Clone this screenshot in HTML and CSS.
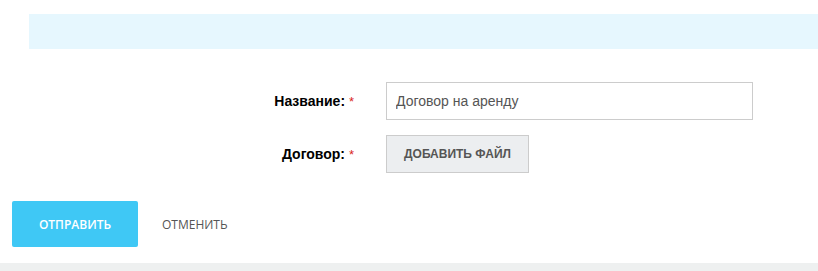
FILE: index.html
```html
<!DOCTYPE html>
<html>
<head>
<meta charset="utf-8">
<title>Договор</title>
<link rel="stylesheet" href="styles.css">
</head>
<body>
  <div class="notice"></div>

  <form class="doc-form">
    <div class="row">
      <label class="label" for="title">Название: <span class="req">*</span></label>
      <input class="field" id="title" type="text" value="Договор на аренду">
    </div>
    <div class="row">
      <label class="label">Договор: <span class="req">*</span></label>
      <button type="button" class="btn-file">Добавить файл</button>
    </div>

    <div class="actions">
      <button type="submit" class="btn-send">Отправить</button>
      <button type="button" class="btn-cancel">Отменить</button>
    </div>
  </form>

  <div class="footer"></div>
</body>
</html>
```

FILE: styles.css
```css
body {
  margin: 0;
  background: #fff;
  font: 13px Arial, "Liberation Sans", sans-serif;
  color: #000;
}

.notice {
  margin: 14px 0 0 29px;
  height: 35px;
  background: #e6f7fe;
}

.doc-form {
  padding-top: 33px;
}

.row {
  display: flex;
  align-items: center;
  margin-bottom: 15px;
}

.label {
  width: 354px;
  margin-right: 32px;
  text-align: right;
  font-weight: bold;
  font-size: 14px;
}

.req {
  color: #d9261c;
  font-weight: normal;
  font-size: 13px;
}

.field {
  box-sizing: border-box;
  width: 367px;
  height: 38px;
  padding: 0 9px;
  border: 1px solid #cccccc;
  font: 14px Arial, "Liberation Sans", sans-serif;
  color: #555;
  outline: none;
}

.btn-file {
  box-sizing: border-box;
  height: 38px;
  padding: 0 17px;
  background: #eceef0;
  border: 1px solid #cccccc;
  font: bold 12px Arial, "Liberation Sans", sans-serif;
  color: #555;
  text-transform: uppercase;
}

.actions {
  display: flex;
  align-items: center;
  margin: 28px 0 0 12px;
}

.btn-send {
  width: 126px;
  height: 46px;
  border: 0;
  border-radius: 2px;
  background: #3fc8f5;
  color: #fff;
  font: 600 12px "Open Sans", sans-serif;
  text-transform: uppercase;
}

.btn-cancel {
  margin-left: 10px;
  padding: 0 14px;
  height: 46px;
  border: 0;
  background: none;
  color: #555;
  font: 12px "Open Sans", sans-serif;
  text-transform: uppercase;
}

.footer {
  margin-top: 16px;
  height: 10px;
  background: #eef0f0;
}
```
